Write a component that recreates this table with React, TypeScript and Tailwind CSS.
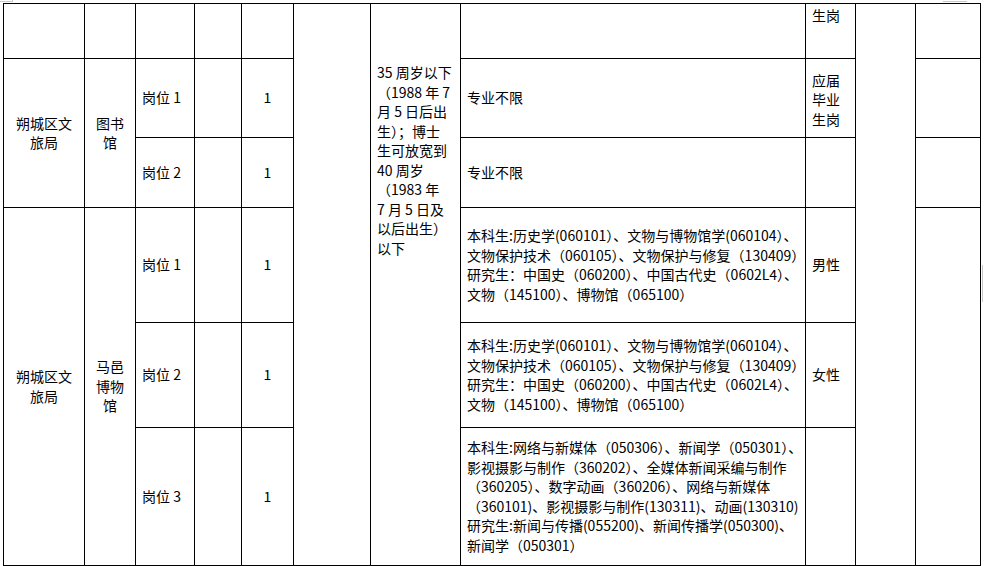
import React from 'react';

const cell = 'border border-black p-0 align-middle';

function Lines({ lines }: { lines: string[] }) {
  return (
    <div className="leading-[19.5px]">
      {lines.map((l, i) => (
        <div key={i} className="whitespace-nowrap">
          {l}
        </div>
      ))}
    </div>
  );
}

const ageLines = [
  '35 周岁以下',
  '（1988 年 7',
  '月 5 日后出',
  '生）；博士',
  '生可放宽到',
  '40 周岁',
  '（1983 年',
  ' 7 月 5 日及',
  '以后出生）',
  '以下',
];

const museumA = [
  '本科生:历史学(060101）、文物与博物馆学(060104）、',
  '文物保护技术（060105）、文物保护与修复（130409）',
  '研究生：中国史（060200）、中国古代史（0602L4）、',
  '文物（145100）、博物馆（065100）',
];

const museumC = [
  '本科生:网络与新媒体（050306）、新闻学（050301）、',
  '影视摄影与制作（360202）、全媒体新闻采编与制作',
  '（360205）、数字动画（360206）、网络与新媒体',
  '（360101)、影视摄影与制作(130311)、动画(130310)',
  '研究生:新闻与传播(055200)、新闻传播学(050300)、',
  '新闻学（050301）',
];

export default function App() {
  return (
    <div className="relative w-[984px] h-[566px] overflow-hidden bg-white text-black text-[14px] font-['Noto_Sans_CJK_SC',sans-serif]">
      {/* word table handles */}
      <div className="absolute left-0 top-[1px] w-[12px] h-[1px] bg-[#c8c8c8]" />
      <div className="absolute left-[12px] top-0 w-[1px] h-[2px] bg-[#c8c8c8]" />
      <div className="absolute left-[943px] top-[1px] w-[24px] h-[1px] bg-[#c8c8c8]" />
      <div className="absolute left-[982px] top-[265px] w-[1px] h-[37px] bg-[#c8c8c8]" />

      <table className="mt-[3px] ml-[3px] border-collapse table-fixed w-[977px] leading-[19.5px]">
        <colgroup>
          <col className="w-[81px]" />
          <col className="w-[51px]" />
          <col className="w-[59px]" />
          <col className="w-[47px]" />
          <col className="w-[52px]" />
          <col className="w-[77px]" />
          <col className="w-[90px]" />
          <col className="w-[345px]" />
          <col className="w-[50px]" />
          <col className="w-[60px]" />
          <col className="w-[65px]" />
        </colgroup>
        <tbody>
          <tr className="h-[55px]">
            <td className={cell} />
            <td className={cell} />
            <td className={cell} />
            <td className={cell} />
            <td className={cell} />
            <td className={cell} rowSpan={6} />
            <td className={`${cell} !align-top pl-[6px] pt-[59px]`} rowSpan={6}>
              <Lines lines={ageLines} />
            </td>
            <td className={cell} />
            <td className={`${cell} !align-top pl-[6px] pt-[2px]`}>生岗</td>
            <td className={cell} rowSpan={6} />
            <td className={cell} />
          </tr>
          <tr className="h-[79px]">
            <td className={`${cell} text-center`} rowSpan={2}>
              朔城区文
              <br />
              旅局
            </td>
            <td className={`${cell} text-center`} rowSpan={2}>
              图书
              <br />
              馆
            </td>
            <td className={`${cell} pl-[6px]`}>岗位 1</td>
            <td className={cell} />
            <td className={`${cell} text-center`}>1</td>
            <td className={`${cell} pl-[6px]`}>专业不限</td>
            <td className={`${cell} pl-[6px] pt-[4px]`}>
              应届
              <br />
              毕业
              <br />
              生岗
            </td>
            <td className={cell} />
          </tr>
          <tr className="h-[70px]">
            <td className={`${cell} pl-[6px]`}>岗位 2</td>
            <td className={cell} />
            <td className={`${cell} text-center`}>1</td>
            <td className={`${cell} pl-[6px]`}>专业不限</td>
            <td className={cell} />
            <td className={cell} />
          </tr>
          <tr className="h-[115px]">
            <td className={`${cell} text-center`} rowSpan={3}>
              朔城区文
              <br />
              旅局
            </td>
            <td className={`${cell} text-center`} rowSpan={3}>
              马邑
              <br />
              博物
              <br />
              馆
            </td>
            <td className={`${cell} pl-[6px]`}>岗位 1</td>
            <td className={cell} />
            <td className={`${cell} text-center`}>1</td>
            <td className={`${cell} pl-[6px]`}>
              <Lines lines={museumA} />
            </td>
            <td className={`${cell} pl-[6px]`}>男性</td>
            <td className={cell} rowSpan={3} />
          </tr>
          <tr className="h-[105px]">
            <td className={`${cell} pl-[6px]`}>岗位 2</td>
            <td className={cell} />
            <td className={`${cell} text-center`}>1</td>
            <td className={`${cell} pl-[6px]`}>
              <Lines lines={museumA} />
            </td>
            <td className={`${cell} pl-[6px]`}>女性</td>
          </tr>
          <tr className="h-[138px]">
            <td className={`${cell} pl-[6px]`}>岗位 3</td>
            <td className={cell} />
            <td className={`${cell} text-center`}>1</td>
            <td className={`${cell} pl-[6px]`}>
              <Lines lines={museumC} />
            </td>
            <td className={cell} />
          </tr>
        </tbody>
      </table>
    </div>
  );
}
